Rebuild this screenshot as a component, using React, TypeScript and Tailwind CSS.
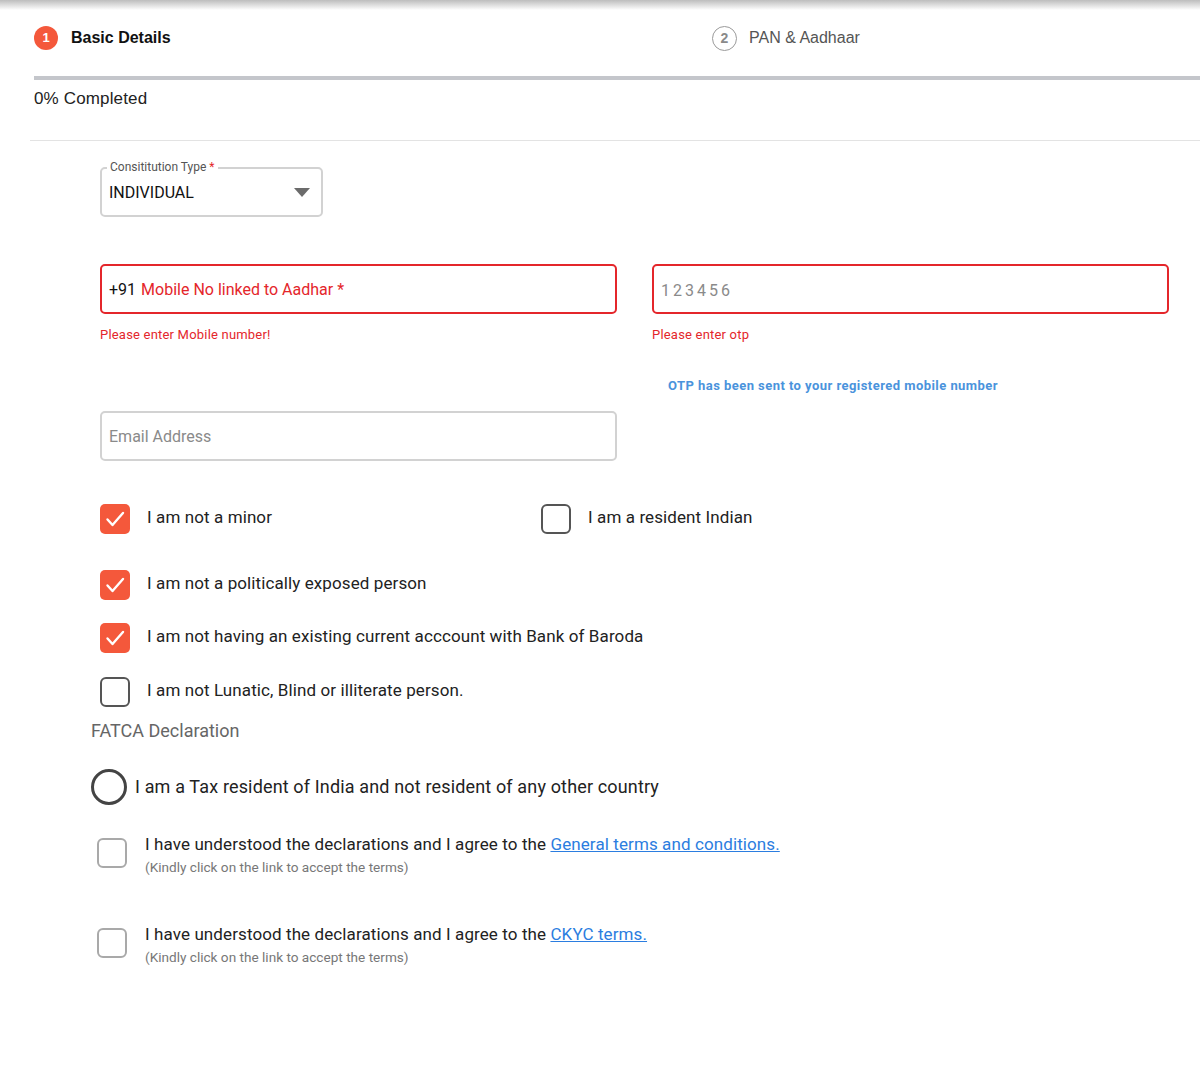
import React from "react";

// Small check mark drawn inside the orange boxes
const Tick = () => (
  <svg viewBox="0 0 24 24" className="w-[24px] h-[24px]" fill="none">
    <path d="M4.5 12.5l5 5.5L20 6" stroke="white" strokeWidth="2.4" strokeLinecap="round" strokeLinejoin="round" />
  </svg>
);

interface CheckProps {
  checked?: boolean;
  light?: boolean;
}

const CheckBox: React.FC<CheckProps> = ({ checked, light }) => {
  if (checked) {
    return (
      <div className="w-[30px] h-[30px] shrink-0 rounded-[5px] bg-[#f4583b] flex items-center justify-center">
        <Tick />
      </div>
    );
  }
  return (
    <div
      className={
        light
          ? "w-[30px] h-[30px] shrink-0 rounded-[6px] border-2 border-[#a9a9a9] bg-white"
          : "w-[30px] h-[30px] shrink-0 rounded-[6px] border-2 border-[#555555] bg-white"
      }
    />
  );
};

const CheckRow: React.FC<{ checked?: boolean; label: string }> = ({ checked, label }) => (
  <div className="flex items-center">
    <CheckBox checked={checked} />
    <span className="ml-[17px] -mt-[5px] text-[17px] leading-[22px] tracking-[0.1px] text-[#222]">{label}</span>
  </div>
);

const App: React.FC = () => {
  return (
    <div className="w-full min-h-[1088px] bg-white font-['Roboto',sans-serif]">
      {/* top shadow */}
      <div className="h-[10px] bg-gradient-to-b from-[#bdbdbd] to-white" />

      {/* stepper */}
      <div className="pl-[34px] pt-[16px] font-['Liberation_Sans',Arial,sans-serif]">
        <div className="flex items-center h-[24px]">
          <div className="w-[678px] flex items-center">
            <div className="w-[24px] h-[24px] rounded-full bg-[#f4583b] text-white text-[13px] font-bold flex items-center justify-center">
              1
            </div>
            <span className="ml-[13px] text-[16px] font-bold text-[#111]">Basic Details</span>
          </div>
          <div className="flex items-center">
            <div className="w-[25px] h-[25px] rounded-full border border-[#9a9a9a] text-[#8a8a8a] text-[14px] font-bold flex items-center justify-center">
              2
            </div>
            <span className="ml-[12px] text-[16px] text-[#555]">PAN &amp; Aadhaar</span>
          </div>
        </div>
        <div className="mt-[26px] h-[4px] bg-[#c4c6cb]" />
        <div className="mt-[7px] text-[17px] leading-[24px] tracking-[0.15px] text-[#222]">0% Completed</div>
      </div>
      <div className="ml-[30px] mt-[29px] border-t border-[#e3e3e3]" />

      {/* form */}
      <div className="pl-[100px] pr-[31px]">
        {/* constitution type select */}
        <div className="mt-[26px] relative w-[223px] h-[50px] border-2 border-[#d2d2d2] rounded-[5px] flex items-center justify-between pl-[7px] pr-[11px]">
          <span className="absolute -top-[10px] left-[5px] bg-white px-[3px] text-[12px] leading-[16px] text-[#555]">
            Consititution Type <span className="text-[#e3262b]">*</span>
          </span>
          <span className="mt-[2px] text-[16px] text-[#111]">INDIVIDUAL</span>
          <svg viewBox="0 0 16 9" className="w-[16px] h-[9px]">
            <path d="M0 0h16L8 9z" fill="#6b6b6b" />
          </svg>
        </div>

        {/* mobile + otp */}
        <div className="mt-[47px] grid grid-cols-2 gap-x-[35px]">
          <div>
            <div className="h-[50px] border-2 border-[#e4262b] rounded-[5px] flex items-center pl-[7px] text-[16px]">
              <span className="mt-[2px] text-[#111]">+91</span>
              <span className="mt-[2px] ml-[5px] text-[#e4262b]">Mobile No linked to Aadhar *</span>
            </div>
            <div className="mt-[12px] text-[13px] leading-[18px] text-[#e4262b] tracking-[0.2px]">
              Please enter Mobile number!
            </div>
          </div>
          <div>
            <div className="h-[50px] border-2 border-[#e4262b] rounded-[5px] flex items-center pl-[7px] text-[16px] tracking-[3px] text-[#8a8a8a]">
              <span className="mt-[3px]">123456</span>
            </div>
            <div className="mt-[12px] text-[13px] leading-[18px] text-[#e4262b] tracking-[0.2px]">
              Please enter otp
            </div>
            <div className="mt-[33px] ml-[16px] text-[13px] leading-[18px] font-bold text-[#4a93dc] tracking-[0.45px]">
              OTP has been sent to your registered mobile number
            </div>
          </div>
        </div>

        {/* email */}
        <div className="mt-[16px] w-[517px] h-[50px] border-2 border-[#d2d2d2] rounded-[5px] flex items-center pl-[7px] text-[16px] text-[#8a8a8a]">
          <span className="mt-[2px]">Email Address</span>
        </div>

        {/* declarations */}
        <div className="mt-[43px] flex items-center">
          <div className="w-[441px]">
            <CheckRow checked label="I am not a minor" />
          </div>
          <CheckRow label="I am a resident Indian" />
        </div>
        <div className="mt-[36px]">
          <CheckRow checked label="I am not a politically exposed person" />
        </div>
        <div className="mt-[23px]">
          <CheckRow checked label="I am not having an existing current acccount with Bank of Baroda" />
        </div>
        <div className="mt-[24px]">
          <CheckRow label="I am not Lunatic, Blind or illiterate person." />
        </div>

        {/* FATCA */}
        <div className="-ml-[9px] mt-[12px] text-[18px] leading-[24px] text-[#666]">FATCA Declaration</div>
        <div className="-ml-[9px] mt-[26px] flex items-center">
          <div className="w-[36px] h-[36px] rounded-full border-[3px] border-[#444] shrink-0" />
          <span className="ml-[8px] text-[18px] leading-[24px] tracking-[0.15px] text-[#222]">
            I am a Tax resident of India and not resident of any other country
          </span>
        </div>

        <div className="-ml-[3px] mt-[28px] flex items-start">
          <div className="mt-[5px]">
            <CheckBox light />
          </div>
          <div className="ml-[18px]">
            <div className="text-[17px] leading-[22px] tracking-[0.1px] text-[#222]">
              I have understood the declarations and I agree to the{" "}
              <a href="#" className="text-[#2b7de0] underline">
                General terms and conditions.
              </a>
            </div>
            <div className="mt-[2px] text-[13.6px] leading-[20px] text-[#777]">
              (Kindly click on the link to accept the terms)
            </div>
          </div>
        </div>

        <div className="-ml-[3px] mt-[46px] flex items-start">
          <div className="mt-[5px]">
            <CheckBox light />
          </div>
          <div className="ml-[18px]">
            <div className="text-[17px] leading-[22px] tracking-[0.1px] text-[#222]">
              I have understood the declarations and I agree to the{" "}
              <a href="#" className="text-[#2b7de0] underline">
                CKYC terms.
              </a>
            </div>
            <div className="mt-[2px] text-[13.6px] leading-[20px] text-[#777]">
              (Kindly click on the link to accept the terms)
            </div>
          </div>
        </div>
      </div>
    </div>
  );
};

export default App;
